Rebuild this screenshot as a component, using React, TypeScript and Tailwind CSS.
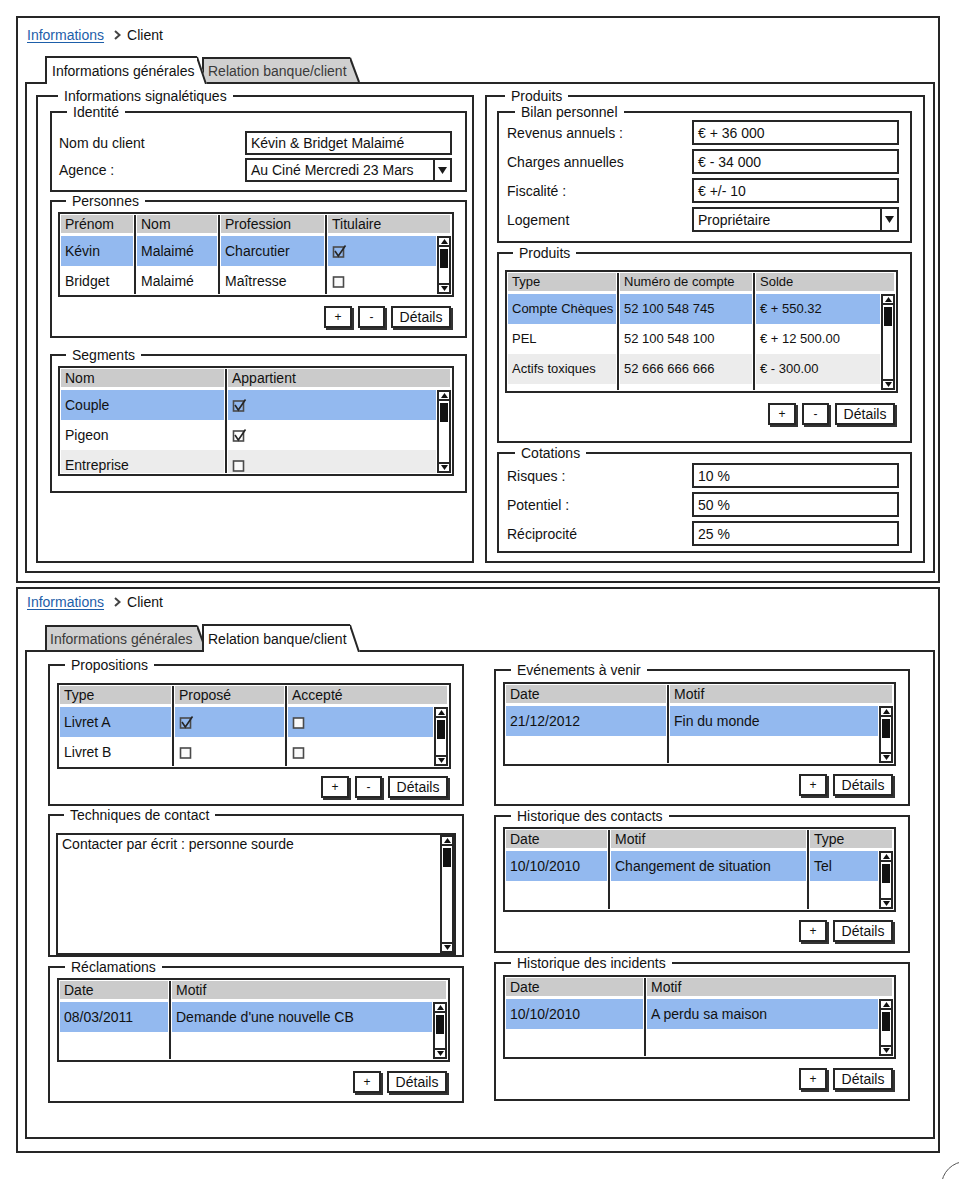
import type { ReactNode } from "react";

const ink = "border-[#262626]";

type Tone = "sel" | "w" | "g";
const toneBg: Record<Tone, string> = {
  sel: "bg-[#93b9ef]",
  w: "bg-white",
  g: "bg-[#ececec]",
};

interface Col {
  label: string;
  w: string;
}

interface Row {
  tone: Tone;
  cells: ReactNode[];
}

const Check = ({ on }: { on?: boolean }) => (
  <svg width="15" height="15" viewBox="0 0 15 15" className="shrink-0">
    <rect x="1.5" y="3" width="10" height="10" fill={on ? "none" : "#fafafa"} stroke="#4a4a4a" strokeWidth="1.6" />
    {on && <path d="M3 7 L6.3 12 L13.5 1.5" fill="none" stroke="#262626" strokeWidth="1.6" />}
  </svg>
);

const Arrow = ({ up }: { up?: boolean }) => (
  <div className={`flex h-[11px] shrink-0 items-center justify-center border-2 ${ink} bg-white`}>
    <svg width="7" height="5" viewBox="0 0 7 5">
      <path d={up ? "M0 5 L3.5 0 L7 5Z" : "M0 0 L3.5 5 L7 0Z"} fill="#111" />
    </svg>
  </div>
);

const Scroll = () => (
  <div className="flex w-[14px] shrink-0 flex-col">
    <Arrow up />
    <div className={`flex-1 border-x-2 ${ink} bg-white px-px pt-[2px]`}>
      <div className="h-[19px] bg-[#111]" />
    </div>
    <Arrow />
  </div>
);

const DataGrid = ({
  cols,
  rows,
  h,
  size = "text-[14px]",
}: {
  cols: Col[];
  rows: Row[];
  h: string;
  size?: string;
}) => (
  <div className={`flex flex-col border-2 ${ink} bg-white p-px ${size} ${h}`}>
    <div className="flex shrink-0">
      {cols.map((c, i) => (
        <div
          key={c.label}
          className={`${c.w} pb-[3px] ${i > 0 ? `border-l-2 ${ink} px-px` : "pr-px"}`}
        >
          <div className="flex h-[18px] items-center whitespace-nowrap bg-[#cbcbcb] pl-[4px]">
            {c.label}
          </div>
        </div>
      ))}
    </div>
    <div className="flex min-h-0 flex-1">
      <div className="min-w-0 flex-1 overflow-hidden">
        {rows.map((r, ri) => (
          <div key={ri} className="flex h-[30px]">
            {cols.map((c, i) => (
              <div
                key={i}
                className={`${c.w} ${i > 0 ? `border-l-2 ${ink} px-px` : "pr-px"}`}
              >
                <div
                  className={`flex h-full items-center overflow-hidden whitespace-nowrap pl-[4px] ${toneBg[r.tone]}`}
                >
                  {r.cells[i]}
                </div>
              </div>
            ))}
          </div>
        ))}
      </div>
      <Scroll />
    </div>
  </div>
);

const Btn = ({ w, children }: { w: string; children: ReactNode }) => (
  <div
    className={`flex h-[22px] ${w} items-center justify-center border-2 ${ink} bg-white shadow-[2px_2px_0_#333]`}
  >
    {children}
  </div>
);

const Buttons = ({ minus = true, className = "" }: { minus?: boolean; className?: string }) => (
  <div className={`flex justify-end gap-[6px] pr-[3px] ${className}`}>
    <Btn w="w-[28px] text-[12px]">+</Btn>
    {minus && <Btn w="w-[27px] text-[12px]">-</Btn>}
    <Btn w="w-[60px] text-[14px]">Détails</Btn>
  </div>
);

const Group = ({
  title,
  className = "",
  children,
}: {
  title: string;
  className?: string;
  children?: ReactNode;
}) => (
  <fieldset className={`min-w-0 border-2 ${ink} ${className}`}>
    <legend className="ml-[8px] px-[6px] leading-[16px]">{title}</legend>
    {children}
  </fieldset>
);

const Field = ({ h, select, children }: { h: string; select?: boolean; children: ReactNode }) => (
  <div className={`flex ${h} w-[207px] items-center border-2 ${ink} bg-white`}>
    <div className="flex-1 whitespace-nowrap pl-[4px]">{children}</div>
    {select && (
      <div className={`flex w-[17px] items-center justify-center self-stretch border-l-2 ${ink}`}>
        <svg width="9" height="7" viewBox="0 0 9 7">
          <path d="M0 0 H9 L4.5 7Z" fill="#1a1a1a" />
        </svg>
      </div>
    )}
  </div>
);

const FormRow = ({ label, children }: { label: string; children: ReactNode }) => (
  <div className="flex items-center justify-between">
    <span>{label}</span>
    {children}
  </div>
);

const Tab = ({
  label,
  active,
  body,
  className = "",
}: {
  label: string;
  active: boolean;
  body: string;
  className?: string;
}) => (
  <div className={`relative flex ${active ? "z-20 h-[28px]" : "z-10 mb-[2px] h-[25px]"} ${className}`}>
    <div
      className={`flex items-center whitespace-nowrap border-l-2 border-t-2 ${ink} ${body} ${
        active ? "bg-white text-[#111]" : "bg-[#d0d0d0] text-[#3a3a3a]"
      }`}
    >
      {label}
    </div>
    <svg className="h-full w-[10px] shrink-0" viewBox="0 0 10 28" preserveAspectRatio="none">
      <polygon points="0,0 1,0 10,28 0,28" fill={active ? "#ffffff" : "#d0d0d0"} />
      <line x1="0" y1="1" x2="9" y2="28" stroke="#262626" strokeWidth="2" vectorEffect="non-scaling-stroke" />
    </svg>
  </div>
);

const Crumb = () => (
  <div className="flex h-[16px] items-center pl-[2px]">
    <span className="text-[#1d5ea9] underline underline-offset-2">Informations</span>
    <svg className="ml-[10px] mr-[6px]" width="7" height="10" viewBox="0 0 7 10">
      <path d="M1 1 L5.5 5 L1 9" fill="none" stroke="#444" strokeWidth="2" />
    </svg>
    <span>Client</span>
  </div>
);

const Window = ({
  active,
  pt,
  tabsMt,
  pb,
  className = "",
  children,
}: {
  active: number;
  pt: string;
  tabsMt: string;
  pb: string;
  className?: string;
  children: ReactNode;
}) => (
  <div className={`border-2 ${ink} pl-[7px] pr-[3px] ${pt} ${pb} ${className}`}>
    <Crumb />
    <div className={`relative z-10 -mb-[2px] ml-[20px] flex h-[28px] items-end ${tabsMt}`}>
      <Tab label="Informations générales" active={active === 0} body={active === 0 ? "w-[152px] pl-[5px]" : "w-[152px] pl-[3px]"} />
      <Tab label="Relation banque/client" active={active === 1} body="w-[148px] pl-[4px]" className="-ml-[5px]" />
    </div>
    <div className={`border-2 ${ink}`}>{children}</div>
  </div>
);

const GeneralPanel = () => (
  <div className="grid grid-cols-[438px_440px] gap-x-[11px] pb-[8px] pl-[9px] pt-[4px]">
    <Group title="Informations signalétiques" className="pl-[12px] pr-[5px]">
      <Group title="Identité" className="pb-[8px] pl-[7px] pr-[13px] pt-[11px]">
        <div className="flex flex-col gap-[3px]">
          <FormRow label="Nom du client">
            <Field h="h-[24px]">Kévin &amp; Bridget Malaimé</Field>
          </FormRow>
          <FormRow label="Agence :">
            <Field h="h-[24px]" select>
              Au Ciné Mercredi 23 Mars
            </Field>
          </FormRow>
        </div>
      </Group>
      <Group title="Personnes" className="mt-[1px] pb-[8px] pl-[6px] pr-[11px] pt-[3px]">
        <DataGrid
          h="h-[85px]"
          cols={[
            { label: "Prénom", w: "w-[73px] shrink-0" },
            { label: "Nom", w: "w-[84px] shrink-0" },
            { label: "Profession", w: "w-[107px] shrink-0" },
            { label: "Titulaire", w: "min-w-0 flex-1" },
          ]}
          rows={[
            { tone: "sel", cells: ["Kévin", "Malaimé", "Charcutier", <Check on />] },
            { tone: "w", cells: ["Bridget", "Malaimé", "Maîtresse", <Check />] },
          ]}
        />
        <Buttons className="mt-[9px]" />
      </Group>
      <Group title="Segments" className="mt-[9px] pb-[15px] pl-[6px] pr-[11px] pt-[3px]">
        <DataGrid
          h="h-[110px]"
          cols={[
            { label: "Nom", w: "w-[164px] shrink-0" },
            { label: "Appartient", w: "min-w-0 flex-1" },
          ]}
          rows={[
            { tone: "sel", cells: ["Couple", <Check on />] },
            { tone: "w", cells: ["Pigeon", <Check on />] },
            { tone: "g", cells: ["Entreprise", <Check />] },
          ]}
        />
      </Group>
    </Group>

    <Group title="Produits" className="pb-[8px] pl-[10px] pr-[11px]">
      <Group title="Bilan personnel" className="pb-[9px] pl-[8px] pr-[11px]">
        <div className="flex flex-col gap-[4px]">
          <FormRow label="Revenus annuels :">
            <Field h="h-[25px]">€ + 36 000</Field>
          </FormRow>
          <FormRow label="Charges annuelles">
            <Field h="h-[25px]">€ - 34 000</Field>
          </FormRow>
          <FormRow label="Fiscalité :">
            <Field h="h-[25px]">€ +/- 10</Field>
          </FormRow>
          <FormRow label="Logement">
            <Field h="h-[25px]" select>
              Propriétaire
            </Field>
          </FormRow>
        </div>
      </Group>
      <Group title="Produits" className="mt-[2px] pb-[16px] pl-[6px] pr-[12px] pt-[9px]">
        <DataGrid
          h="h-[123px]"
          size="text-[13px]"
          cols={[
            { label: "Type", w: "w-[109px] shrink-0" },
            { label: "Numéro de compte", w: "w-[136px] shrink-0" },
            { label: "Solde", w: "min-w-0 flex-1" },
          ]}
          rows={[
            { tone: "sel", cells: ["Compte Chèques", "52 100 548 745", "€ + 550.32"] },
            { tone: "w", cells: ["PEL", "52 100 548 100", "€ + 12 500.00"] },
            { tone: "g", cells: ["Actifs toxiques", "52 666 666 666", "€ - 300.00"] },
            { tone: "w", cells: ["", "", ""] },
          ]}
        />
        <Buttons className="mt-[10px]" />
      </Group>
      <Group title="Cotations" className="mt-[2px] pb-[5px] pl-[8px] pr-[11px] pt-[2px]">
        <div className="flex flex-col gap-[4px]">
          <FormRow label="Risques :">
            <Field h="h-[25px]">10 %</Field>
          </FormRow>
          <FormRow label="Potentiel :">
            <Field h="h-[25px]">50 %</Field>
          </FormRow>
          <FormRow label="Réciprocité">
            <Field h="h-[25px]">25 %</Field>
          </FormRow>
        </div>
      </Group>
    </Group>
  </div>
);

const RelationPanel = () => (
  <div className="grid grid-cols-[416px_416px] items-start gap-x-[30px] pb-[34px] pl-[21px] pt-[5px]">
    <div className="flex flex-col">
      <Group title="Propositions" className="pb-[6px] pl-[7px] pr-[11px] pt-[10px]">
        <DataGrid
          h="h-[86px]"
          cols={[
            { label: "Type", w: "w-[112px] shrink-0" },
            { label: "Proposé", w: "w-[113px] shrink-0" },
            { label: "Accepté", w: "min-w-0 flex-1" },
          ]}
          rows={[
            { tone: "sel", cells: ["Livret A", <Check on />, <Check />] },
            { tone: "w", cells: ["Livret B", <Check />, <Check />] },
            { tone: "g", cells: ["", "", ""] },
          ]}
        />
        <Buttons className="mt-[7px]" />
      </Group>
      <Group title="Techniques de contact" className="mt-[1px] pl-[6px] pr-[6px] pt-[10px]">
        <div className={`flex h-[122px] border-2 ${ink} bg-white`}>
          <div className="flex-1 pl-[4px] pt-[1px]">Contacter par écrit : personne sourde</div>
          <Scroll />
        </div>
      </Group>
      <Group title="Réclamations" className="mt-[2px] pb-[8px] pl-[7px] pr-[12px] pt-[3px]">
        <DataGrid
          h="h-[84px]"
          cols={[
            { label: "Date", w: "w-[109px] shrink-0" },
            { label: "Motif", w: "min-w-0 flex-1" },
          ]}
          rows={[
            { tone: "sel", cells: ["08/03/2011", "Demande d'une nouvelle CB"] },
            { tone: "w", cells: ["", ""] },
          ]}
        />
        <Buttons minus={false} className="mt-[9px]" />
      </Group>
    </div>

    <div className="flex flex-col pt-[5px]">
      <Group title="Evénements à venir" className="pb-[8px] pl-[7px] pr-[12px] pt-[4px]">
        <DataGrid
          h="h-[84px]"
          cols={[
            { label: "Date", w: "w-[161px] shrink-0" },
            { label: "Motif", w: "min-w-0 flex-1" },
          ]}
          rows={[
            { tone: "sel", cells: ["21/12/2012", "Fin du monde"] },
            { tone: "w", cells: ["", ""] },
          ]}
        />
        <Buttons minus={false} className="mt-[8px]" />
      </Group>
      <Group title="Historique des contacts" className="mt-[2px] pb-[9px] pl-[7px] pr-[12px] pt-[3px]">
        <DataGrid
          h="h-[85px]"
          cols={[
            { label: "Date", w: "w-[102px] shrink-0" },
            { label: "Motif", w: "w-[199px] shrink-0" },
            { label: "Type", w: "min-w-0 flex-1" },
          ]}
          rows={[
            { tone: "sel", cells: ["10/10/2010", "Changement de situation", "Tel"] },
            { tone: "w", cells: ["", "", ""] },
          ]}
        />
        <Buttons minus={false} className="mt-[8px]" />
      </Group>
      <Group title="Historique des incidents" className="mt-[2px] pb-[9px] pl-[7px] pr-[12px] pt-[4px]">
        <DataGrid
          h="h-[84px]"
          cols={[
            { label: "Date", w: "w-[138px] shrink-0" },
            { label: "Motif", w: "min-w-0 flex-1" },
          ]}
          rows={[
            { tone: "sel", cells: ["10/10/2010", "A perdu sa maison"] },
            { tone: "w", cells: ["", ""] },
          ]}
        />
        <Buttons minus={false} className="mt-[9px]" />
      </Group>
    </div>
  </div>
);

export default function App() {
  return (
    <div className="relative h-[1179px] overflow-hidden bg-white pl-[16px] pt-[16px] font-['Liberation_Sans',Arial,sans-serif] text-[14px] leading-[16px] text-[#111]">
      <div className="w-[924px]">
        <Window active={0} pt="pt-[9px]" tabsMt="mt-[13px]" pb="pb-[8px]">
          <GeneralPanel />
        </Window>
        <Window active={1} pt="pt-[5px]" tabsMt="mt-[14px]" pb="pb-[12px]" className="mt-[4px]">
          <RelationPanel />
        </Window>
      </div>
      <div className="absolute left-[941px] top-[1161px] h-[50px] w-[50px] rounded-full border-[1.5px] border-[#555]" />
    </div>
  );
}
